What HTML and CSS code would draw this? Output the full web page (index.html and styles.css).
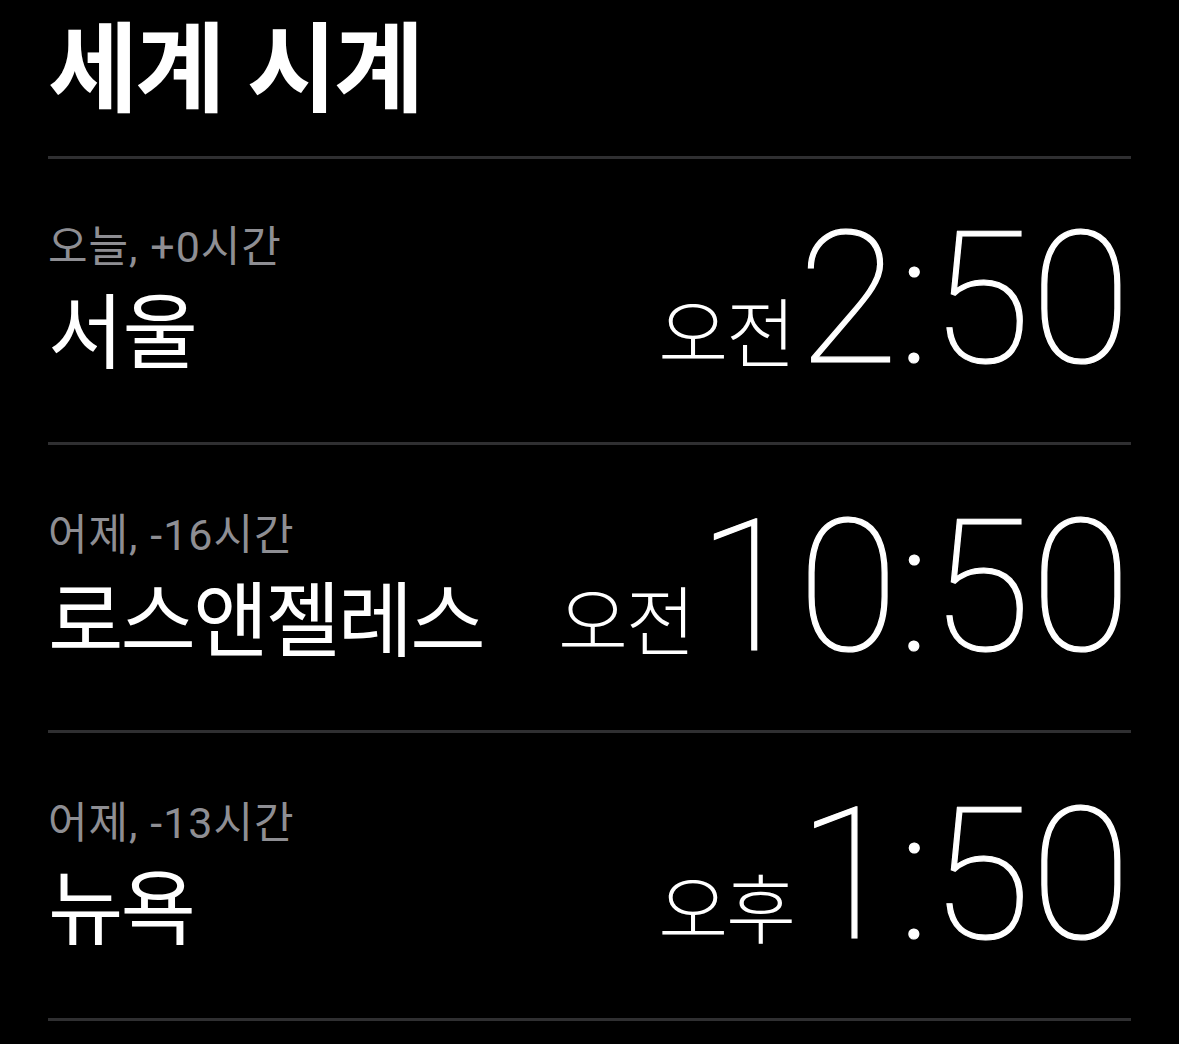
FILE: index.html
```html
<!DOCTYPE html>
<html lang="ko">
<head>
<meta charset="utf-8">
<title>세계 시계</title>
<link rel="stylesheet" href="styles.css">
</head>
<body>
<main class="screen">
  <header class="header">
    <h1 class="title">세계 시계</h1>
  </header>
  <ul class="clocks">
    <li class="clock">
      <div class="place">
        <div class="offset">오늘, +0시간</div>
        <div class="city">서울</div>
      </div>
      <div class="time"><span class="ampm">오전</span><span class="digits">2:50</span></div>
    </li>
    <li class="clock">
      <div class="place">
        <div class="offset">어제, -16시간</div>
        <div class="city">로스앤젤레스</div>
      </div>
      <div class="time"><span class="ampm">오전</span><span class="digits">10:50</span></div>
    </li>
    <li class="clock">
      <div class="place">
        <div class="offset">어제, -13시간</div>
        <div class="city">뉴욕</div>
      </div>
      <div class="time"><span class="ampm">오후</span><span class="digits">1:50</span></div>
    </li>
  </ul>
</main>
</body>
</html>
```
FILE: styles.css
```css
html, body {
  margin: 0;
  padding: 0;
  background: #000;
  color: #fff;
}

body {
  font-family: "Noto Sans CJK KR", "Noto Sans", sans-serif;
  height: 1044px;
  overflow: hidden;
}

.screen {
  padding: 0 48px;
}

.header {
  height: 159px;
  border-bottom: 3px solid #2f2f31;
  box-sizing: border-box;
  display: flex;
  align-items: flex-start;
}

.title {
  margin: 0;
  padding-top: 1px;
  font-size: 98px;
  font-weight: 700;
  line-height: 120px;
  letter-spacing: -3px;
}

.clocks {
  list-style: none;
  margin: 0;
  padding: 0;
}

.clock {
  height: 288px;
  box-sizing: border-box;
  border-bottom: 3px solid #2f2f31;
  display: flex;
  justify-content: space-between;
  align-items: last baseline;
  padding-bottom: 57px;
}

.clock:first-child {
  height: 286px;
}

.place {
  display: flex;
  flex-direction: column;
}

.offset {
  font-family: "Roboto", "Noto Sans CJK KR", sans-serif;
  font-size: 43px;
  line-height: 48px;
  color: #8e8e93;
  letter-spacing: 1px;
}

.city {
  font-size: 82px;
  line-height: 90px;
  letter-spacing: -3px;
  margin-top: 11px;
}

.clock:first-child .city {
  letter-spacing: -1px;
}

.time {
  display: flex;
  align-items: baseline;
}

.ampm {
  font-size: 76px;
  font-weight: 300;
  letter-spacing: -2px;
  margin-right: 4px;
}

.digits {
  font-family: "Roboto", sans-serif;
  font-weight: 100;
  font-size: 183px;
  line-height: 170px;
  -webkit-text-stroke: 1.2px #fff;
}
```
